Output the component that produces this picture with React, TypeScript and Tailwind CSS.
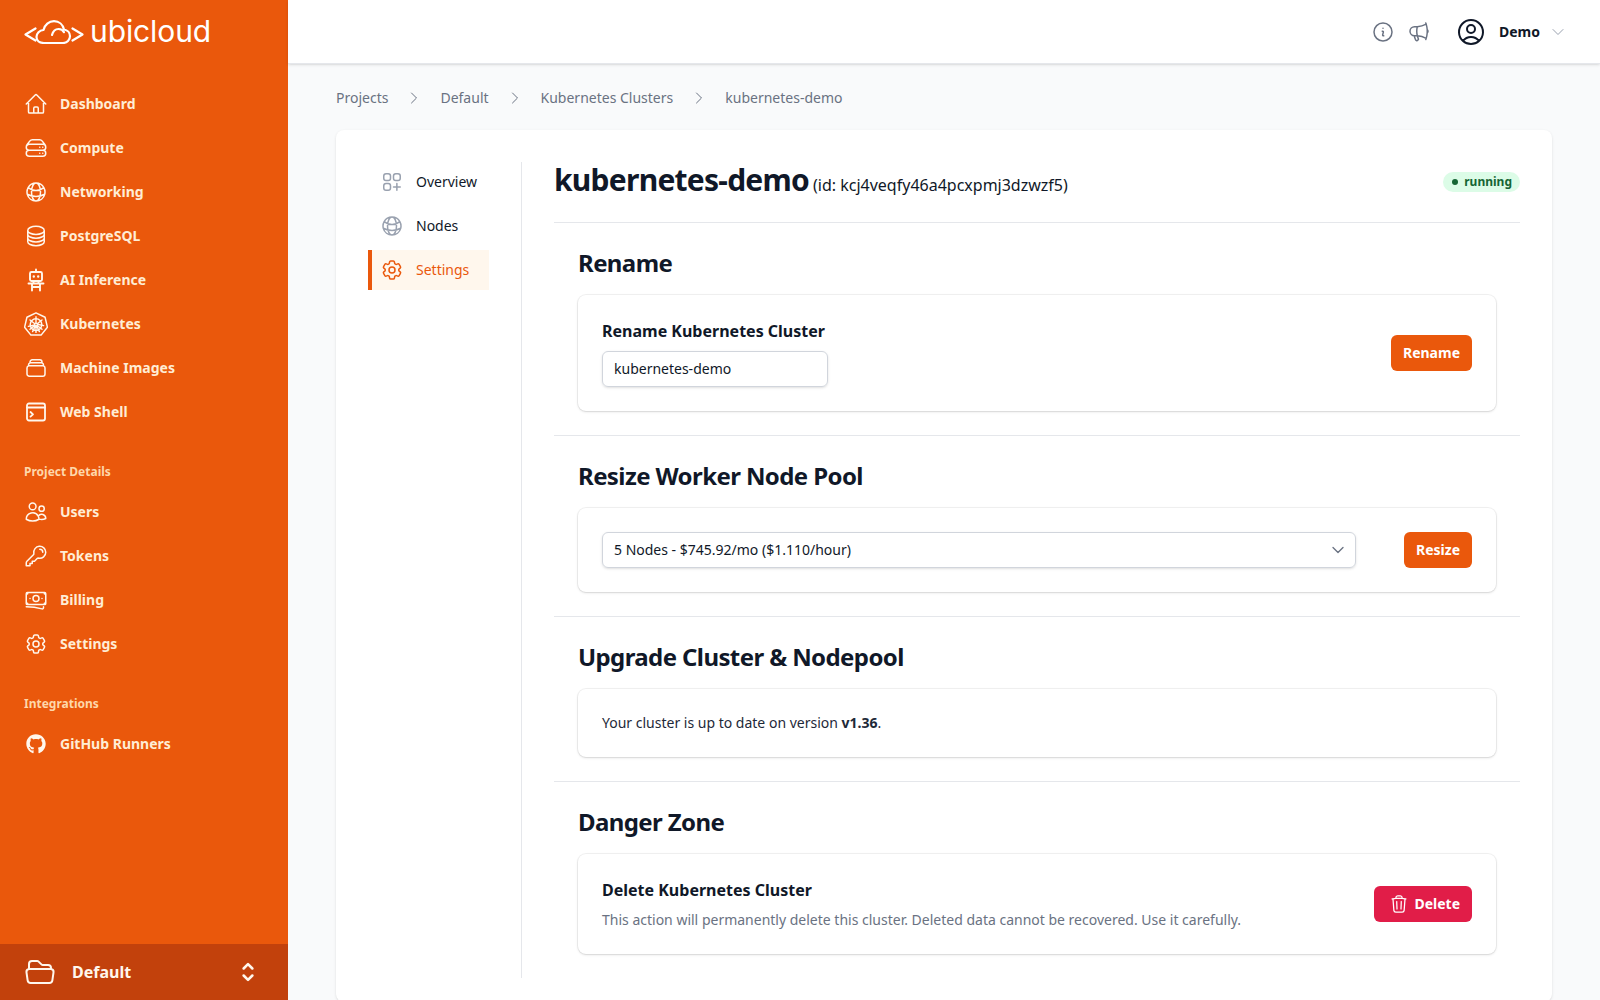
import React from "react";
import {
  HiOutlineHome, HiOutlineServerStack, HiOutlineGlobeAlt, HiOutlineCircleStack, HiOutlineRectangleStack,
  HiOutlineUsers, HiOutlineKey, HiOutlineBanknotes, HiOutlineCog6Tooth,
  HiOutlineFolderOpen, HiOutlineChevronUpDown, HiOutlineInformationCircle, HiOutlineMegaphone,
  HiOutlineUserCircle, HiOutlineChevronDown, HiOutlineChevronRight, HiOutlineSquaresPlus, HiOutlineTrash,
} from "react-icons/hi2";
import { FaGithub } from "react-icons/fa";

function Robot({ className }: { className?: string }) {
  return (
    <svg className={className} viewBox="0 0 24 24" fill="none" stroke="currentColor" strokeWidth="1.9" strokeLinecap="round" strokeLinejoin="round">
      <path d="M12 1.5v2.5" />
      <rect x="6" y="4" width="12" height="9" rx="1.5" />
      <path d="M9.8 8.5h.01M14.2 8.5h.01" strokeWidth="2.4" />
      <path d="M4.5 15.5h15M8 15.5V22.5M16 15.5V22.5M8 19h8M9.500 13v2.5M14.5 13v2.5" />
    </svg>
  );
}

function Kube({ className }: { className?: string }) {
  return (
    <svg className={className} viewBox="0 0 24 24" fill="none" stroke="currentColor" strokeLinecap="round" strokeLinejoin="round">
      <path strokeWidth="1.5" d="M12 .9 21.1 5.3 23.4 15.2 17.1 23.1H6.9L.6 15.2 2.9 5.3Z" />
      <circle cx="12" cy="12.6" r="5.8" strokeWidth="1.5" />
      <circle cx="12" cy="12.6" r="1.4" strokeWidth="1.2" />
      <path strokeWidth="1.4" d="M12 4.8v6.3M12 14.1v6.3M6 8l4.8 3.700M13.2 13.5l4.8 3.700M18 8l-4.8 3.700M10.8 13.5l-4.8 3.700M4.400 14.4l6.200-1.400M13.4 12.2l6.200 1.400M8.600 19.6l2.700-5.700M12.7 13.9l2.700 5.700" />
    </svg>
  );
}

function WebShell({ className }: { className?: string }) {
  return (
    <svg className={className} viewBox="0 0 24 24" fill="none" stroke="currentColor" strokeWidth="1.8" strokeLinecap="round" strokeLinejoin="round">
      <rect x="3" y="3.5" width="18" height="17" rx="2" />
      <path d="M3 7.5h18" />
      <path d="M6.500 12l2.500 2.300-2.500 2.300" />
    </svg>
  );
}

function Github({ className }: { className?: string }) {
  return <FaGithub className={className + " p-[2px]"} />;
}

function Logo() {
  return (
    <div className="flex items-center h-[64px]">
      <svg className="w-[60px] h-[24px] shrink-0" viewBox="0 0 60 24" fill="none" stroke="white" strokeWidth="2.2" strokeLinecap="round" strokeLinejoin="round">
        <path d="M11.500 8.500 1.500 14.500l10 6" />
        <path d="M48.500 8.500l10 6-10 6" />
        <path d="M20 23h19c4 0 7-3 7-6.700 0-3.400-2.500-6.200-6-6.800C39 4.600 35 1.200 30 1.200c-5 0-9.300 3.500-10.500 8.800-4 .3-7 3.500-7 7 0 3.500 3 6 7.500 6Z" />
        <path d="M28 15c1-3.700 3.200-6 6.500-6 2.600 0 4.600 1.200 5.500 3.200" />
      </svg>
      <span className="ml-[6px] pb-[2px] font-['Inter',sans-serif] font-normal text-white text-[30px] leading-none tracking-[-0.1px]">ubicloud</span>
    </div>
  );
}

type IconT = React.ComponentType<{ className?: string }>;
const nav1: [string, IconT][] = [
  ["Dashboard", HiOutlineHome],
  ["Compute", HiOutlineServerStack],
  ["Networking", HiOutlineGlobeAlt],
  ["PostgreSQL", HiOutlineCircleStack],
  ["AI Inference", Robot],
  ["Kubernetes", Kube],
  ["Machine Images", HiOutlineRectangleStack],
  ["Web Shell", WebShell],
];
const nav2: [string, IconT][] = [
  ["Users", HiOutlineUsers],
  ["Tokens", HiOutlineKey],
  ["Billing", HiOutlineBanknotes],
  ["Settings", HiOutlineCog6Tooth],
];

function NavItem({ label, Icon }: { label: string; Icon: IconT }) {
  return (
    <a className="flex items-center gap-3 h-[40px] text-sm font-bold text-[#ffedd5]">
      <Icon className="w-6 h-6 shrink-0 text-[#fff7ed]" />
      <span>{label}</span>
    </a>
  );
}

function Section({ title, children }: { title: string; children: React.ReactNode }) {
  return (
    <section className="p-6 border-t border-gray-200">
      <h3 className="text-2xl leading-8 font-bold tracking-tight text-gray-900 mb-4">{title}</h3>
      <div className="rounded-lg bg-white shadow-sm ring-1 ring-black/5">{children}</div>
    </section>
  );
}

export default function App() {
  return (
    <div className="flex h-screen overflow-hidden bg-[#f9fafb] font-['Noto_Sans',sans-serif]">
      <aside className="w-[288px] shrink-0 bg-[#ea580c] flex flex-col">
        <div className="flex-1 px-6">
          <Logo />
          <nav className="mt-[20px] flex flex-col gap-1">
            {nav1.map(([l, I]) => <NavItem key={l} label={l} Icon={I} />)}
          </nav>
          <div className="mt-[32px] mb-[12px] text-xs leading-4 font-bold text-[#fed7aa]">Project Details</div>
          <nav className="flex flex-col gap-1">
            {nav2.map(([l, I]) => <NavItem key={l} label={l} Icon={I} />)}
          </nav>
          <div className="mt-[32px] mb-[12px] text-xs leading-4 font-bold text-[#fed7aa]">Integrations</div>
          <NavItem label="GitHub Runners" Icon={Github} />
        </div>
        <div className="h-[56px] bg-[#c2410c] flex items-center px-6 text-white">
          <HiOutlineFolderOpen className="w-8 h-8 text-[#fff7ed]" />
          <span className="ml-[16px] flex-1 text-base font-bold text-[#fff7ed]">Default</span>
          <HiOutlineChevronUpDown strokeWidth={2.2} className="w-7 h-7 mr-[2px] text-[#fff7ed]" />
        </div>
      </aside>

      <div className="flex-1 min-w-0 flex flex-col">
        <header className="h-[64px] shrink-0 bg-white border-b border-gray-200 shadow-sm flex items-center justify-end pr-[34px]">
          <HiOutlineInformationCircle className="w-6 h-6 text-gray-500" />
          <HiOutlineMegaphone className="w-6 h-6 text-gray-500 ml-3" />
          <HiOutlineUserCircle className="w-8 h-8 text-gray-900 ml-[24px]" />
          <span className="ml-[12px] text-sm font-bold text-gray-900">Demo</span>
          <HiOutlineChevronDown className="w-4 h-4 text-gray-400 ml-[10px]" />
        </header>

        <main className="flex-1 px-12 pt-[24px]">
          <nav className="flex items-center h-5 text-sm text-gray-500">
            <span>Projects</span>
            <HiOutlineChevronRight className="w-4 h-4 mx-[18px] text-gray-500" />
            <span>Default</span>
            <HiOutlineChevronRight className="w-4 h-4 mx-[18px] text-gray-500" />
            <span>Kubernetes Clusters</span>
            <HiOutlineChevronRight className="w-4 h-4 mx-[18px] text-gray-500" />
            <span>kubernetes-demo</span>
          </nav>

          <div className="mt-[22px] rounded-lg bg-white shadow-sm pl-[32px] pr-[32px] pt-[32px] pb-6 flex">
            <div className="w-[154px] shrink-0 pr-[32px] border-r border-gray-200">
              <div className="flex flex-col gap-1 w-[121px]">
                <a className="flex items-center gap-3 h-10 pl-[12px] text-sm text-gray-900">
                  <HiOutlineSquaresPlus className="w-6 h-6 text-gray-400" /> Overview
                </a>
                <a className="flex items-center gap-3 h-10 pl-[12px] text-sm text-gray-900">
                  <HiOutlineGlobeAlt className="w-6 h-6 text-gray-400" /> Nodes
                </a>
                <a className="flex items-center gap-3 h-10 pl-[8px] text-sm text-[#ea580c] bg-[#fff7ed] border-l-4 border-[#ea580c]">
                  <HiOutlineCog6Tooth className="w-6 h-6" /> Settings
                </a>
              </div>
            </div>

            <div className="flex-1 min-w-0 pl-[32px]">
              <div className="flex items-center justify-between h-[60px] pb-[24px]">
                <h1 className="text-3xl font-bold tracking-tight text-gray-900">
                  kubernetes-demo<span className="ml-1 text-base font-normal tracking-normal">(id: kcj4veqfy46a4pcxpmj3dzwzf5)</span>
                </h1>
                <span className="mt-[4px] inline-flex items-center gap-[6px] rounded-full bg-[#dcfce7] pl-[9px] pr-2 h-[20px] text-xs font-bold text-[#166534]">
                  <span className="w-[6px] h-[6px] rounded-full bg-[#166534]" />running
                </span>
              </div>

              <Section title="Rename">
                <div className="flex items-center justify-between p-6">
                  <div>
                    <label className="block text-base leading-6 font-bold text-gray-900">Rename Kubernetes Cluster</label>
                    <div className="mt-2 w-[226px] h-[36px] rounded-md border border-gray-300 shadow-sm flex items-center px-[11px] text-sm text-gray-900">kubernetes-demo</div>
                  </div>
                  <button className="h-[36px] px-3 rounded-md bg-[#ea580c] text-sm font-bold text-white">Rename</button>
                </div>
              </Section>
              <Section title="Resize Worker Node Pool">
                <div className="flex items-center gap-12 p-6">
                  <div className="flex-1 h-[36px] rounded-md border border-gray-300 shadow-sm flex items-center justify-between pl-[11px] pr-[9px] text-sm text-gray-900">
                    <span>5 Nodes - $745.92/mo ($1.110/hour)</span>
                    <HiOutlineChevronDown strokeWidth={2} className="w-4 h-4 text-gray-500" />
                  </div>
                  <button className="h-[36px] px-3 rounded-md bg-[#ea580c] text-sm font-bold text-white">Resize</button>
                </div>
              </Section>
              <Section title="Upgrade Cluster & Nodepool">
                <div className="p-6 text-sm leading-5 text-gray-800">
                  Your cluster is up to date on version <b className="font-bold">v1.36</b>.
                </div>
              </Section>
              <Section title="Danger Zone">
                <div className="flex items-center justify-between p-6">
                  <div>
                    <div className="text-base leading-6 font-bold text-gray-900">Delete Kubernetes Cluster</div>
                    <div className="mt-2 text-sm leading-5 text-gray-500">This action will permanently delete this cluster. Deleted data cannot be recovered. Use it carefully.</div>
                  </div>
                  <button className="h-[36px] pl-[15px] pr-3 rounded-md bg-[#e11d48] text-sm font-bold text-white flex items-center gap-[5px]">
                    <HiOutlineTrash className="w-5 h-5" /> Delete
                  </button>
                </div>
              </Section>
            </div>
          </div>
        </main>
      </div>
    </div>
  );
}
